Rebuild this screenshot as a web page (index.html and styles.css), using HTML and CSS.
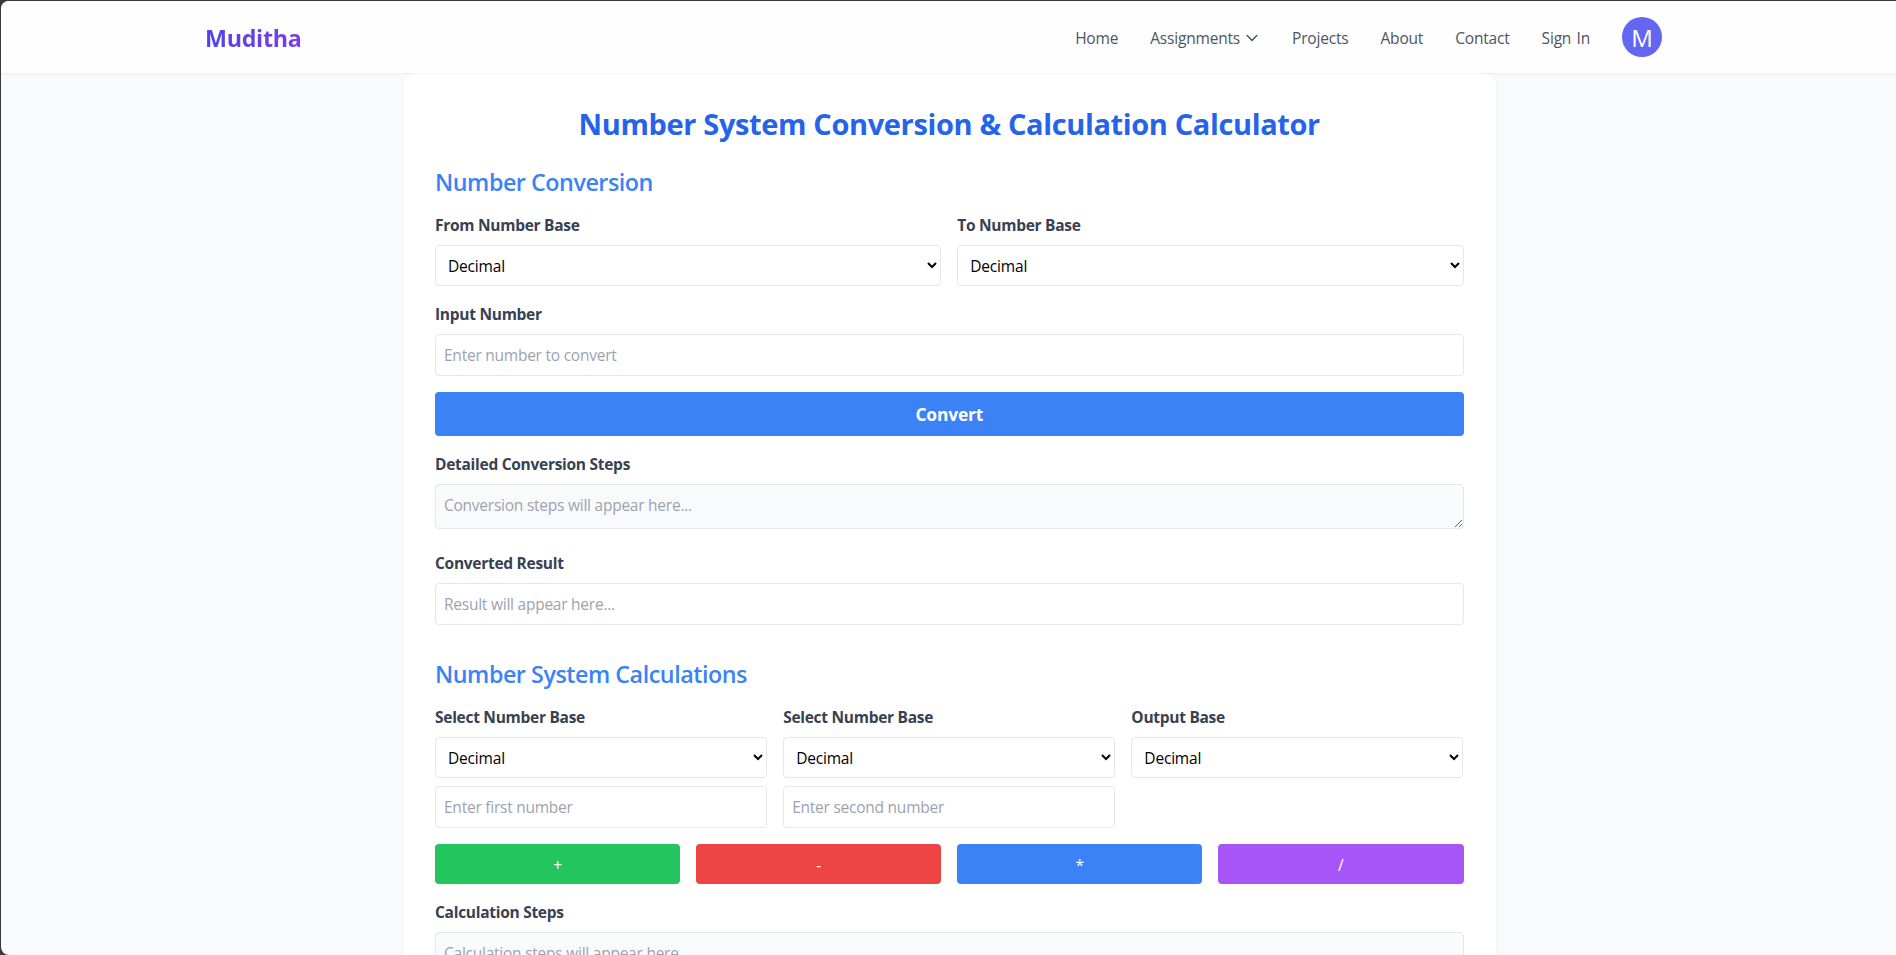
FILE: index.html
```
<!DOCTYPE html>
<html lang="en">
<head>
<meta charset="utf-8">
<title>Number System Calculator</title>
<link rel="stylesheet" href="styles.css">
</head>
<body>
<div class="page">
  <header class="header">
    <a class="logo">Muditha</a>
    <nav class="nav">
      <a>Home</a>
      <a class="dropdown">Assignments
        <svg width="16" height="16" viewBox="0 0 24 24" fill="none" stroke="currentColor" stroke-width="2.2" stroke-linecap="round" stroke-linejoin="round"><path d="M4.8 8.2l7.2 7.6 7.2-7.6"/></svg>
      </a>
      <a>Projects</a>
      <a>About</a>
      <a>Contact</a>
      <a>Sign In</a>
      <span class="avatar">M</span>
    </nav>
  </header>
  <main class="card">
    <h1 class="title">Number System Conversion &amp; Calculation Calculator</h1>

    <section class="section conversion">
      <h2 class="heading">Number Conversion</h2>
      <div class="grid cols-2">
        <div><label class="label">From Number Base</label><select class="field select"><option>Decimal</option></select></div>
        <div><label class="label">To Number Base</label><select class="field select"><option>Decimal</option></select></div>
      </div>
      <div class="group"><label class="label">Input Number</label><input class="field input" placeholder="Enter number to convert"></div>
      <button class="btn convert">Convert</button>
      <div class="group"><label class="label">Detailed Conversion Steps</label><textarea class="field steps" placeholder="Conversion steps will appear here..."></textarea></div>
      <div class="group result"><label class="label">Converted Result</label><input class="field input" placeholder="Result will appear here..."></div>
    </section>

    <section class="section">
      <h2 class="heading">Number System Calculations</h2>
      <div class="grid cols-3">
        <div><label class="label">Select Number Base</label><select class="field select"><option>Decimal</option></select><input class="field input second" placeholder="Enter first number"></div>
        <div><label class="label">Select Number Base</label><select class="field select"><option>Decimal</option></select><input class="field input second" placeholder="Enter second number"></div>
        <div><label class="label">Output Base</label><select class="field select"><option>Decimal</option></select></div>
      </div>
      <div class="grid cols-4">
        <button class="btn op green">+</button>
        <button class="btn op red">-</button>
        <button class="btn op blue">*</button>
        <button class="btn op purple">/</button>
      </div>
      <div class="group"><label class="label">Calculation Steps</label><textarea class="field steps" placeholder="Calculation steps will appear here..."></textarea></div>
    </section>
  </main>
</div>
</body>
</html>
```
FILE: styles.css
```
* { box-sizing: border-box; margin: 0; padding: 0; }
body {
  height: 100vh;
  overflow: hidden;
  background: #39383b;
  padding: 1px 0 0 1px;
  font: 15.5px/24px "Open Sans", "Noto Sans", sans-serif;
  letter-spacing: -0.0155em;
}
.page {
  height: 100%;
  overflow: hidden;
  background: #f9fafc;
  border-radius: 8px 0 0 8px;
}
.header {
  position: relative;
  z-index: 1;
  height: 72px;
  padding: 0 234px 0 204px;
  display: flex;
  align-items: center;
  justify-content: space-between;
  background: #fefefe;
  box-shadow: 0 1px 2px rgba(0, 0, 0, 0.06);
}
.logo {
  padding-top: 2px;
  font-size: 23.3px;
  line-height: 32px;
  font-weight: 700;
  letter-spacing: -0.013em;
  background: linear-gradient(to right, #4f46e5, #7c3aed);
  -webkit-background-clip: text;
  background-clip: text;
  color: transparent;
}
.nav {
  display: flex;
  align-items: center;
  gap: 32px;
  color: #4b5563;
  letter-spacing: -0.012em;
  word-spacing: 1.5px;
}
.nav a { padding-top: 1px; }
.dropdown { display: flex; align-items: center; gap: 4px; }
.avatar {
  width: 40px;
  height: 40px;
  border-radius: 50%;
  background: #6366f1;
  color: #fff;
  font-size: 24px;
  line-height: 41px;
  text-align: center;
  letter-spacing: 0;
}
.card {
  width: 1092.5px;
  height: 1100px;
  margin-left: 402px;
  padding: 32px;
  background: #fff;
  border-radius: 12px;
  box-shadow: 0 0 3px rgba(0, 0, 0, 0.06);
}
.title {
  padding-top: 1px;
  font-size: 29px;
  line-height: 36px;
  font-weight: 700;
  letter-spacing: -0.0127em;
  text-align: center;
  color: #2563eb;
  margin-bottom: 23px;
}
.heading {
  padding-top: 1px;
  font-size: 23.3px;
  line-height: 32px;
  font-weight: 600;
  letter-spacing: -0.02em;
  color: #3b82f6;
  margin-bottom: 15px;
}
.conversion { margin-bottom: 32px; }
.grid { display: grid; gap: 16px; margin-bottom: 16px; }
.cols-2 { grid-template-columns: repeat(2, 1fr); }
.cols-3 { grid-template-columns: repeat(3, 1fr); }
.cols-4 { grid-template-columns: repeat(4, 1fr); }
.group { margin-bottom: 16px; }
.label {
  display: block;
  font-weight: 700;
  letter-spacing: -0.018em;
  color: #374151;
  margin-bottom: 8px;
}
.field {
  display: block;
  width: 100%;
  border: 1px solid #e5e7eb;
  border-radius: 4px;
  padding: 8px;
  background: #fff;
  color: #000;
  font: inherit;
  letter-spacing: inherit;
}
.field::placeholder { color: #9ca3af; opacity: 1; }
.select { height: 41px; letter-spacing: -0.012em; }
.input { height: 42px; }
.second { margin-top: 8px; }
.steps {
  height: 45px;
  overflow: hidden;
  background: #f9fafb;
  resize: both;
  margin-bottom: 22px;
}
.btn {
  display: block;
  width: 100%;
  border: 0;
  border-radius: 4px;
  color: #fff;
  font: inherit;
}
.convert {
  height: 44px;
  font-size: 17.4px;
  font-weight: 700;
  letter-spacing: -0.01em;
  background: #3b82f6;
  margin-bottom: 16px;
}
.op { height: 40px; padding-top: 1px; }
.green { background: #22c55e; }
.red { background: #ef4444; }
.blue { background: #3b82f6; }
.purple { background: #a855f7; }
```
